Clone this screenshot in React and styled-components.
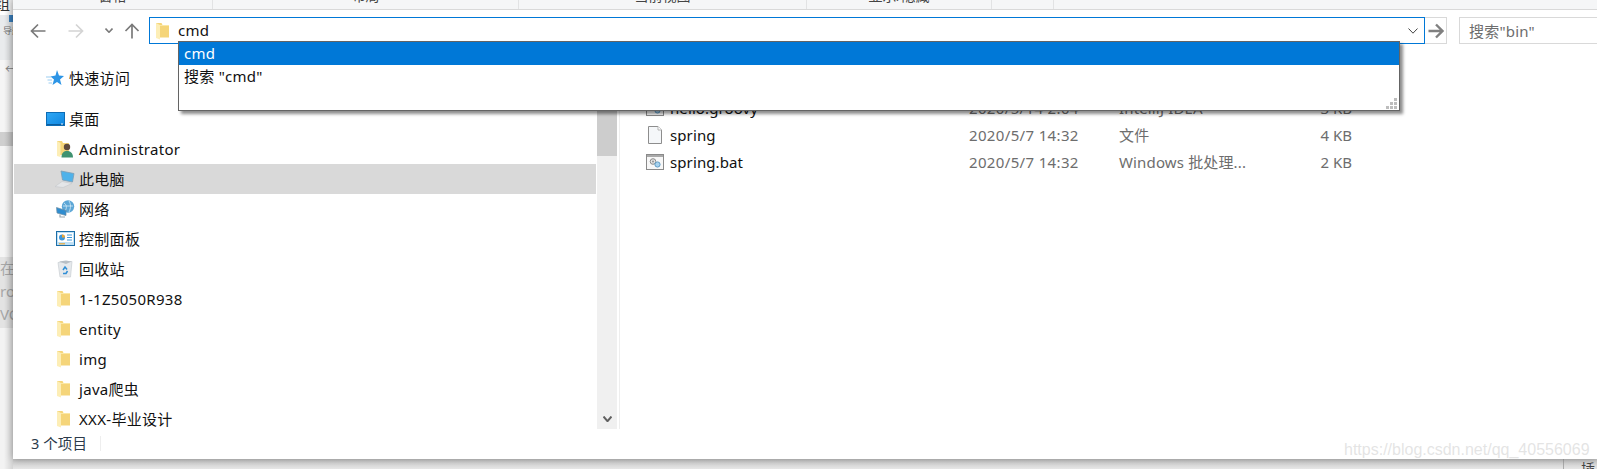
import React from "react";
import styled, { createGlobalStyle } from "styled-components";

const GlobalStyle = createGlobalStyle`
  html, body {
    margin: 0;
    padding: 0;
    background: #fff;
    overflow: hidden;
  }
  * {
    box-sizing: border-box;
  }
`;

const FONT = `"Noto Sans", "Noto Sans CJK SC", sans-serif`;

const Page = styled.div`
  position: relative;
  width: 1597px;
  height: 469px;
  overflow: hidden;
  display: grid;
  grid-template-columns: 13px 1584px;
  grid-template-rows: 459px 10px;
  font-family: ${FONT};
  font-size: 15px;
  color: #1a1a1a;
`;

/* what shows of the app behind the explorer window */
const LeftStrip = styled.div`
  position: relative;
  grid-row: 1 / 3;
  display: flex;
  flex-direction: column;
  overflow: hidden;
  background: #f3f3f3;

  &::after {
    content: "";
    position: absolute;
    inset: 0;
    background: linear-gradient(to right, transparent 30%, rgba(0, 0, 0, 0.13));
  }
`;

const StripBand = styled.div`
  flex: none;
  height: ${(p) => p.$h}px;
  background: ${(p) => p.$bg};
  color: #9a9a9a;
  overflow: hidden;
  white-space: nowrap;
`;

const StripTab = styled.div`
  height: 14px;
  font-size: 15px;
  line-height: 11px;
  color: #333;
  margin-top: -1px;
  margin-left: -5px;
`;

const BlueSquare = styled.div`
  width: 5px;
  height: 7px;
  margin-left: 9px;
  background: #3d86c8;
`;

const TinyLabel = styled.div`
  font-size: 9px;
  line-height: 14px;
  margin: 2px 0 0 3px;
  color: #777;
`;

const StripBack = styled.div`
  margin: 3px 0 0 5px;
  font-size: 12px;
  line-height: 14px;
  color: #888;
`;

const StripLine = styled.div`
  font-size: 15px;
  line-height: 23px;
  color: #a8a8a8;
`;

const Window = styled.div`
  position: relative;
  z-index: 1;
  display: flex;
  flex-direction: column;
  background: #fff;
  box-shadow: 0 0 7px rgba(0, 0, 0, 0.32);
`;

const BottomStrip = styled.div`
  display: flex;
  justify-content: flex-end;
  overflow: hidden;
  background: linear-gradient(#c6c6c6, #e6e6e6);
`;

const InsertTab = styled.div`
  width: 34px;
  height: 10px;
  padding-left: 17px;
  border-left: 1px solid #aaa;
  font-size: 14px;
  line-height: 20px;
  color: #444;
`;

const Watermark = styled.div`
  position: absolute;
  z-index: 2;
  left: 1344px;
  top: 439px;
  font-family: "Liberation Sans", sans-serif;
  font-size: 16px;
  line-height: 22px;
  color: rgba(205, 205, 205, 0.55);
`;

const RibbonTabs = styled.div`
  flex: none;
  height: 10px;
  display: flex;
  background: #f5f6f7;
  border-bottom: 1px solid #d9d9d9;
  overflow: hidden;
`;

const RibbonGroup = styled.div`
  flex: none;
  width: ${(p) => p.$w}px;
  height: 9px;
  display: flex;
  align-items: flex-end;
  justify-content: center;
  padding-bottom: 4px;
  border-right: 1px solid #e2e3e4;
  font-size: 14px;
  line-height: 18px;
  color: #444;
  white-space: nowrap;
`;

const AddressRow = styled.div`
  flex: none;
  height: 34px;
  padding-top: 7px;
  display: flex;
  align-items: stretch;
`;

const NavGroup = styled.div`
  flex: none;
  width: 136px;
  padding-left: 17px;
  display: flex;
  align-items: center;
`;

const NavButton = styled.span`
  flex: none;
  display: flex;
  margin-left: ${(p) => p.$gap || 0}px;
`;

const AddressBox = styled.div`
  position: relative;
  flex: none;
  width: 1276px;
  height: 27px;
  padding: 0 0 0 6px;
  display: flex;
  align-items: center;
  border: 1px solid #0078d7;
`;

const AddressText = styled.span`
  margin: 0 0 2px 9px;
  font-size: 15px;
  letter-spacing: 0.2px;
  color: #111;
`;

const AddressChevron = styled.span`
  display: flex;
  margin-left: auto;
  margin-right: 6px;
`;

const GoButton = styled.div`
  flex: none;
  width: 22px;
  height: 27px;
  display: flex;
  align-items: center;
  justify-content: center;
  border: 1px solid #d9d9d9;
  border-left: none;
`;

const SearchBox = styled.div`
  flex: none;
  width: 150px;
  height: 27px;
  margin-left: 12px;
  padding-left: 9px;
  display: flex;
  align-items: center;
  border: 1px solid #d9d9d9;
  font-size: 15px;
  letter-spacing: 0.2px;
  color: #6d6d6d;
`;

const Suggestions = styled.div`
  position: absolute;
  z-index: 3;
  left: 28px;
  top: 23px;
  width: 1222px;
  height: 70px;
  background: #fff;
  border: 1px solid #646464;
  box-shadow: 3px 3px 3px rgba(0, 0, 0, 0.45);
`;

const Suggestion = styled.div`
  height: 23px;
  padding-left: 5px;
  font-size: 15px;
  line-height: 23px;
  letter-spacing: 0.25px;
  color: ${(p) => (p.$active ? "#fff" : "#111")};
  background: ${(p) => (p.$active ? "#0078d7" : "transparent")};
`;

const Grip = styled.svg`
  position: absolute;
  right: 2px;
  bottom: 1px;
`;

const Body = styled.div`
  flex: none;
  height: 385px;
  display: flex;
`;

const NavPane = styled.div`
  flex: none;
  width: 584px;
  padding: 19px 0 0 1px;
  overflow: hidden;
`;

const NavRow = styled.div`
  width: 582px;
  height: 30px;
  margin-top: ${(p) => p.$gap || 0}px;
  padding-left: ${(p) => (p.$depth ? 41 : 31)}px;
  padding-bottom: 1px;
  display: flex;
  align-items: center;
  gap: 4px;
  background: ${(p) => (p.$active ? "#d9d9d9" : "transparent")};
  font-size: 15px;
  letter-spacing: 0.3px;
  color: #111;
  white-space: nowrap;
`;

const NavIcon = styled.span`
  flex: none;
  width: 20px;
  height: 20px;
  padding-right: ${(p) => (p.$folder ? 4 : 0)}px;
  display: flex;
  align-items: center;
  justify-content: center;
`;

const Scrollbar = styled.div`
  flex: none;
  width: 20px;
  display: flex;
  flex-direction: column;
  background: #f0f0f0;
`;

const ScrollThumb = styled.div`
  flex: none;
  height: 72px;
  margin-top: 40px;
  background: #cdcdcd;
`;

const ScrollDown = styled.div`
  margin-top: auto;
  height: 20px;
  display: flex;
  align-items: center;
  justify-content: center;
`;

const FilePane = styled.div`
  flex: 1;
  margin-left: 2px;
  padding-top: 50px;
  border-left: 1px solid #eeeeee;
`;

const FileRow = styled.div`
  height: 27px;
  padding-left: 26px;
  display: grid;
  grid-template-columns: 323px 150px 153px 80px;
  align-items: center;
  font-size: 15px;
  color: #6d6d6d;
  white-space: nowrap;
`;

const FileName = styled.div`
  display: flex;
  align-items: center;
  gap: 6px;
  letter-spacing: 0.1px;
  color: #111;
`;

const FileIcon = styled.span`
  flex: none;
  width: 18px;
  margin-top: 1px;
  display: flex;
  justify-content: center;
`;

const FileDate = styled.div`
  letter-spacing: 0.35px;
`;

const FileType = styled.div`
  letter-spacing: 0.15px;
`;

const FileSize = styled.div`
  text-align: right;
`;

const StatusBar = styled.div`
  flex: none;
  height: 30px;
  padding: 0 0 2px 18px;
  display: flex;
  align-items: center;
  font-size: 14.5px;
  letter-spacing: 0.1px;
  color: #2b3a4a;
`;

const StatusCount = styled.span`
  padding-right: 13px;
  border-right: 1px solid #eeeeee;
  line-height: 15px;
`;

function Arrow({ dir = "left", color = "#7a7a7a", sw = 1.7 }) {
  const turn = { left: 0, right: 180, up: 90 }[dir];
  return (
    <svg width="16" height="16" viewBox="0 0 16 16" fill="none" style={{ transform: `rotate(${turn}deg)` }}>
      <path d="M1.5 8H15.5M8 1.5L1.5 8L8 14.5" stroke={color} strokeWidth={sw} />
    </svg>
  );
}

function Chevron({ w = 8, h = 5, color = "#7a7a7a", sw = 1.6 }) {
  return (
    <svg width={w} height={h} viewBox={`0 0 ${w} ${h}`} fill="none">
      <path d={`M0.5 0.5L${w / 2} ${h - 0.8}L${w - 0.5} 0.5`} stroke={color} strokeWidth={sw} />
    </svg>
  );
}

function FolderIcon() {
  return (
    <svg width="13" height="18" viewBox="0 0 13 18">
      <path d="M0 1H5.5L6.5 3H13V15.5H0Z" fill="#f5d57a" />
      <path d="M0 1L4 3V17.5L0 16Z" fill="#fdeeb6" />
      <path d="M4 3H13V4H4Z" fill="#fbe8a6" />
    </svg>
  );
}

function StarIcon() {
  return (
    <svg width="18" height="18" viewBox="0 0 18 18">
      <path d="M11 1L13 6.5L18 7L14 10.5L15.5 16L11 13L6.5 16L8 10.5L4.5 7.5L9.5 6.5Z" fill="#2d95e6" />
      <path d="M0 8H5M1.5 11H6M2.5 14H6" stroke="#9ccdf2" strokeWidth="1.2" />
    </svg>
  );
}

function DesktopIcon() {
  return (
    <svg width="19" height="14" viewBox="0 0 19 14">
      <defs>
        <linearGradient id="desk" x1="0" y1="0" x2="1" y2="1">
          <stop offset="0" stopColor="#2fa8f5" />
          <stop offset="1" stopColor="#0f86e0" />
        </linearGradient>
      </defs>
      <rect x="0.5" y="0.5" width="18" height="13" fill="url(#desk)" stroke="#0d6cb5" />
      <path d="M1 12.5H18" stroke="#0b5d9e" />
      <rect x="15" y="11.5" width="2" height="1" fill="#e8f4fd" />
    </svg>
  );
}

function UserFolderIcon() {
  return (
    <svg width="17" height="18" viewBox="0 0 17 18">
      <path d="M0 1H5L6 3H12V15H0Z" fill="#f5d57a" />
      <path d="M0 1L3.5 3V17L0 16Z" fill="#fdeeb6" />
      <circle cx="10" cy="7" r="3.2" fill="#5e4a3c" />
      <path d="M4.5 17.5C4.5 12.5 7 11 10 11C13 11 16 12.5 16 17.5Z" fill="#3f9270" />
    </svg>
  );
}

function LaptopIcon() {
  return (
    <svg width="20" height="18" viewBox="0 0 20 18">
      <path d="M6 1L19 3.5L17.5 12L7.5 10Z" fill="#4fb2ea" stroke="#7b9db5" strokeWidth="0.8" />
      <path d="M0 16.5L7 11.5L17 13.5L8 17.5Z" fill="#e4e6e8" stroke="#c5c8cb" strokeWidth="0.6" />
    </svg>
  );
}

function NetworkIcon() {
  return (
    <svg width="19" height="18" viewBox="0 0 19 18">
      <circle cx="12" cy="6.5" r="6.2" fill="#5ca6d6" />
      <path d="M8 3C11 5 11 8 9 11M13 1C15 4 15 8 13 12M7 6H17" stroke="#d5ecf8" strokeWidth="0.8" fill="none" />
      <path d="M0.5 7.5L10 10.5V15.5L1 13Z" fill="#2f8dd0" stroke="#6d8ea5" strokeWidth="0.7" />
      <path d="M4 14.5V17H9" stroke="#9aa7b0" strokeWidth="1.2" fill="none" />
    </svg>
  );
}

function ControlPanelIcon() {
  return (
    <svg width="19" height="15" viewBox="0 0 19 15">
      <rect x="0.5" y="0.5" width="18" height="14" fill="#bfe0f5" stroke="#1c6ea8" />
      <rect x="2" y="2" width="15" height="9" fill="#ffffff" />
      <circle cx="6" cy="6.5" r="3" fill="#3f97d8" />
      <path d="M6 6.5V3.5A3 3 0 0 1 9 6.5Z" fill="#f0a733" />
      <path d="M11 4H16M11 6.5H16M11 9H16" stroke="#3f97d8" strokeWidth="1.2" />
      <path d="M3 12.8H9" stroke="#e8a838" strokeWidth="1.2" />
    </svg>
  );
}

function BinIcon() {
  return (
    <svg width="16" height="18" viewBox="0 0 16 18">
      <path d="M1 2.5L15 1.5L13.5 17H3Z" fill="#e6e9ec" stroke="#c9ced2" strokeWidth="0.7" />
      <path d="M2 1.5L9 0.5L14.5 1.5L9 4Z" fill="#b8bfc5" />
      <path d="M6 10L8 7L10 9.5M10.5 11L9 13.5H6" stroke="#2f8ed6" strokeWidth="1.5" fill="none" />
    </svg>
  );
}

function PlainFileIcon() {
  return (
    <svg width="14" height="18" viewBox="0 0 14 18">
      <path d="M0.5 0.5H10L13.5 4V17.5H0.5Z" fill="#f5f7f9" stroke="#8d8d8d" />
      <path d="M10 0.5V4H13.5" fill="#fff" stroke="#b5b5b5" />
    </svg>
  );
}

function BatIcon() {
  return (
    <svg width="18" height="16" viewBox="0 0 18 16">
      <rect x="0.5" y="0.5" width="17" height="15" fill="#f7f7f7" stroke="#8a8a8a" />
      <path d="M1 2H17" stroke="#a9a9a9" strokeWidth="2" />
      <circle cx="7" cy="7.5" r="2.8" fill="#e4e4e4" stroke="#8a8a8a" />
      <circle cx="7" cy="7.5" r="0.9" fill="#8a8a8a" />
      <circle cx="11.5" cy="10.5" r="2.6" fill="#a8d2ee" stroke="#5f9cc6" />
    </svg>
  );
}

function GripIcon() {
  const dots = [
    [8, 0],
    [4, 4],
    [8, 4],
    [0, 8],
    [4, 8],
    [8, 8],
  ];
  return (
    <Grip width="11" height="11" viewBox="0 0 11 11">
      {dots.map(([x, y]) => (
        <rect key={`${x}-${y}`} x={x} y={y} width="3" height="3" fill="#bdbdbd" />
      ))}
    </Grip>
  );
}

const ribbonGroups = [
  { w: 200, label: "窗格" },
  { w: 306, label: "布局" },
  { w: 288, label: "当前视图" },
  { w: 185, label: "显示/隐藏" },
  { w: 62, label: "" },
];

const navItems = [
  { label: "快速访问", icon: <StarIcon /> },
  { label: "桌面", icon: <DesktopIcon />, gap: 11 },
  { label: "Administrator", icon: <UserFolderIcon />, depth: 1 },
  { label: "此电脑", icon: <LaptopIcon />, depth: 1, active: true },
  { label: "网络", icon: <NetworkIcon />, depth: 1 },
  { label: "控制面板", icon: <ControlPanelIcon />, depth: 1 },
  { label: "回收站", icon: <BinIcon />, depth: 1 },
  { label: "1-1Z5050R938", icon: <FolderIcon />, depth: 1, folder: true },
  { label: "entity", icon: <FolderIcon />, depth: 1, folder: true },
  { label: "img", icon: <FolderIcon />, depth: 1, folder: true },
  { label: "java爬虫", icon: <FolderIcon />, depth: 1, folder: true },
  { label: "XXX-毕业设计", icon: <FolderIcon />, depth: 1, folder: true },
];

const files = [
  { name: "hello.groovy", date: "2020/5/14 2:04", type: "IntelliJ IDEA", size: "3 KB", icon: <BatIcon /> },
  { name: "spring", date: "2020/5/7 14:32", type: "文件", size: "4 KB", icon: <PlainFileIcon /> },
  { name: "spring.bat", date: "2020/5/7 14:32", type: "Windows 批处理...", size: "2 KB", icon: <BatIcon /> },
];

export default function App() {
  return (
    <Page>
      <GlobalStyle />
      <LeftStrip>
        <StripBand $h={15} $bg="#ffffff">
          <StripTab>组</StripTab>
        </StripBand>
        <StripBand $h={45} $bg="#e9ebed">
          <BlueSquare />
          <TinyLabel>导航</TinyLabel>
        </StripBand>
        <StripBand $h={72} $bg="#f5f5f5">
          <StripBack>←</StripBack>
        </StripBand>
        <StripBand $h={14} $bg="#cfcfcf" />
        <StripBand $h={111} $bg="#f5f5f5" />
        <StripBand $h={71} $bg="#e3e3e3">
          <StripLine>在</StripLine>
          <StripLine>roo</StripLine>
          <StripLine>VC</StripLine>
        </StripBand>
      </LeftStrip>

      <Window>
        <RibbonTabs>
          {ribbonGroups.map((g, i) => (
            <RibbonGroup key={i} $w={g.w}>
              {g.label}
            </RibbonGroup>
          ))}
        </RibbonTabs>

        <AddressRow>
          <NavGroup>
            <NavButton>
              <Arrow />
            </NavButton>
            <NavButton $gap={22}>
              <Arrow dir="right" color="#d4d4d4" />
            </NavButton>
            <NavButton $gap={21}>
              <Chevron />
            </NavButton>
            <NavButton $gap={11}>
              <Arrow dir="up" />
            </NavButton>
          </NavGroup>
          <AddressBox>
            <FolderIcon />
            <AddressText>cmd</AddressText>
            <AddressChevron>
              <Chevron w={10} h={6} color="#444" sw={1} />
            </AddressChevron>
            <Suggestions>
              <Suggestion $active>cmd</Suggestion>
              <Suggestion>搜索 "cmd"</Suggestion>
              <GripIcon />
            </Suggestions>
          </AddressBox>
          <GoButton>
            <Arrow dir="right" color="#808080" sw={2.4} />
          </GoButton>
          <SearchBox>搜索"bin"</SearchBox>
        </AddressRow>

        <Body>
          <NavPane>
            {navItems.map((item) => (
              <NavRow key={item.label} $depth={item.depth} $active={item.active} $gap={item.gap}>
                <NavIcon $folder={item.folder}>{item.icon}</NavIcon>
                {item.label}
              </NavRow>
            ))}
          </NavPane>
          <Scrollbar>
            <ScrollThumb />
            <ScrollDown>
              <Chevron w={9} h={6} color="#606060" sw={2} />
            </ScrollDown>
          </Scrollbar>
          <FilePane>
            {files.map((f) => (
              <FileRow key={f.name}>
                <FileName>
                  <FileIcon>{f.icon}</FileIcon>
                  {f.name}
                </FileName>
                <FileDate>{f.date}</FileDate>
                <FileType>{f.type}</FileType>
                <FileSize>{f.size}</FileSize>
              </FileRow>
            ))}
          </FilePane>
        </Body>

        <StatusBar>
          <StatusCount>3 个项目</StatusCount>
        </StatusBar>
      </Window>

      <BottomStrip>
        <InsertTab>插入</InsertTab>
      </BottomStrip>
      <Watermark>https://blog.csdn.net/qq_40556069</Watermark>
    </Page>
  );
}
